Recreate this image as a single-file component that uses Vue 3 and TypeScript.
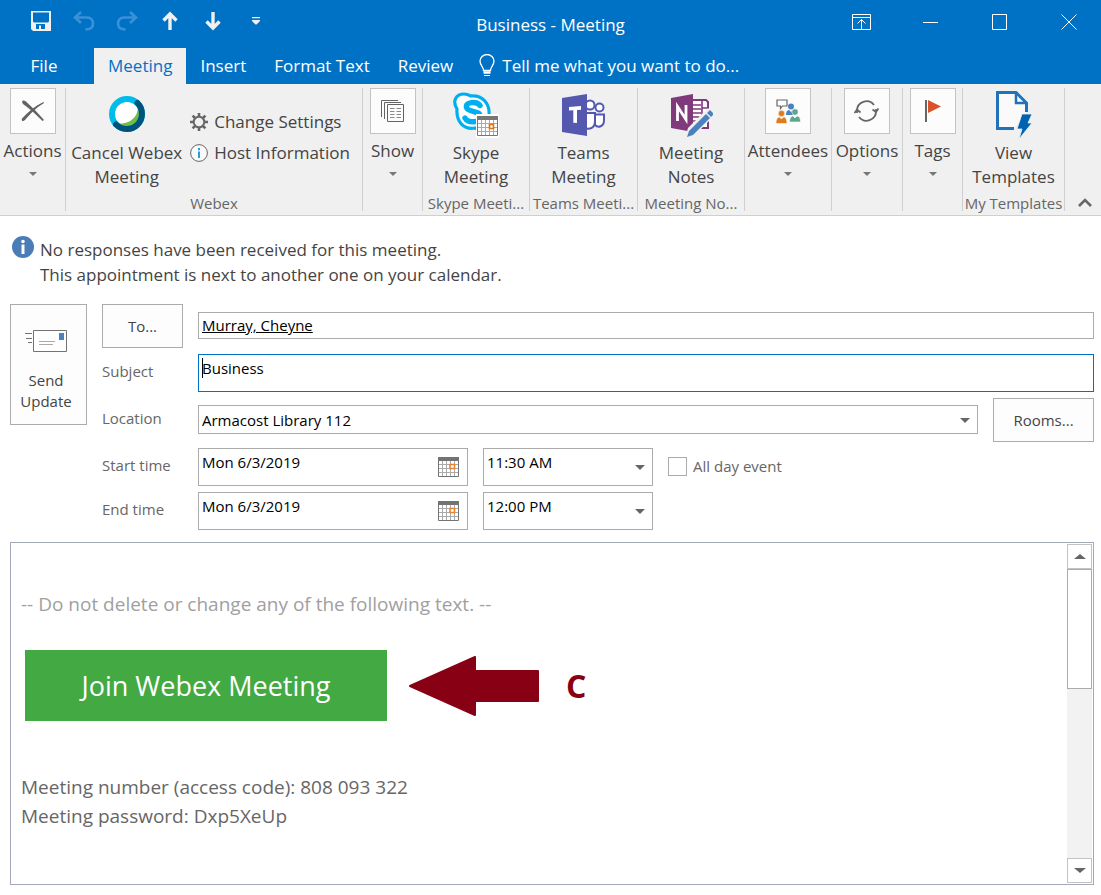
<script setup lang="ts">
import { ref } from 'vue'

const tabs: string[] = ['Meeting', 'Insert', 'Format Text', 'Review']
const activeTab = ref('Meeting')
const attendee = ref('Murray, Cheyne')
const subject = ref('Business')
const meetingLocation = ref('Armacost Library 112')
const allDay = ref(false)

interface TimeRow {
  id: string
  label: string
  date: string
  time: string
}

const timeRows = ref<TimeRow[]>([
  { id: 'start', label: 'Start time', date: 'Mon 6/3/2019', time: '11:30 AM' },
  { id: 'end', label: 'End time', date: 'Mon 6/3/2019', time: '12:00 PM' },
])
const times: string[] = ['11:30 AM', '12:00 PM']
</script>

<template>
  <div class="window">
    <header class="titlebar">
      <div class="quick">
        <button type="button" aria-label="Save">
          <svg width="20" height="20" viewBox="0 0 20 20">
            <path fill="#f0f0f0" fill-rule="evenodd" d="M0 0H20V20H2L0 18ZM2 1.5V10.5L3 11.5H17L18 10.5V1.5ZM5 13V18H8V14.5H10V18H14V13Z" />
          </svg>
        </button>
        <button type="button" aria-label="Undo">
          <svg width="22" height="20" viewBox="0 0 22 20" fill="none" stroke="#3a91d8" stroke-width="2.6">
            <path d="M8 1L2 6.5L8 12M2 6.5H14C18 6.5 20 9.5 20 12.5C20 16 17.5 18.5 12.5 18.5" />
          </svg>
        </button>
        <button type="button" aria-label="Redo">
          <svg width="22" height="20" viewBox="0 0 22 20" fill="none" stroke="#3a91d8" stroke-width="2.6">
            <path d="M14 1L20 6.5L14 12M20 6.5H8C4 6.5 2 9.5 2 12.5C2 16 4.5 18.5 9.5 18.5" />
          </svg>
        </button>
        <button type="button" aria-label="Previous item">
          <svg width="16" height="20" viewBox="0 0 16 20" fill="none" stroke="#f0f0f0" stroke-width="3.4">
            <path d="M8 19V3M1.5 9.5L8 3L14.5 9.5" />
          </svg>
        </button>
        <button type="button" aria-label="Next item">
          <svg width="16" height="20" viewBox="0 0 16 20" fill="none" stroke="#f0f0f0" stroke-width="3.4">
            <path d="M8 1V17M1.5 10.5L8 17L14.5 10.5" />
          </svg>
        </button>
        <button type="button" aria-label="Customize toolbar">
          <svg width="8" height="8" viewBox="0 0 8 8" fill="#f0f0f0">
            <path d="M0 0H8V1.3H0ZM0 3H8V4L4.5 7.5H3.5L0 4Z" />
          </svg>
        </button>
      </div>
      <h1 class="title">Business - Meeting</h1>
      <div class="controls">
        <button type="button" aria-label="Ribbon display options">
          <svg width="19" height="16" viewBox="0 0 19 16" fill="none" stroke="#fff">
            <path d="M.5.5H18.5V15.5H.5ZM.5 3.5H18.5M9.5 15V5.5M5.5 9.5L9.5 5.5L13.5 9.5" />
          </svg>
        </button>
        <button type="button" aria-label="Minimize">
          <svg width="15" height="16" viewBox="0 0 15 16" stroke="#fff"><path d="M0 8.5H15" /></svg>
        </button>
        <button type="button" aria-label="Maximize">
          <svg width="15" height="16" viewBox="0 0 15 16" fill="none" stroke="#fff"><path d="M.5.5H14.5V15.5H.5Z" /></svg>
        </button>
        <button type="button" aria-label="Close">
          <svg width="16" height="16" viewBox="0 0 16 16" stroke="#fff"><path d="M.5.5L15.5 15.5M15.5.5L.5 15.5" /></svg>
        </button>
      </div>
    </header>

    <nav class="tabs">
      <button type="button" class="tab file">File</button>
      <button
        v-for="tab in tabs"
        :key="tab"
        type="button"
        class="tab"
        :class="{ active: tab === activeTab }"
        @click="activeTab = tab"
      >{{ tab }}</button>
      <button type="button" class="tab tell">
        <svg width="16" height="23" viewBox="0 0 16 23" fill="none" stroke="#fff">
          <path stroke-width="1.3" d="M4.5 16.5C4.5 12.5 1 11.5 1 7A7 6.5 0 0 1 15 7C15 11.5 11.5 12.5 11.5 16.5Z" />
          <path stroke-width="2.5" d="M4.5 18.5H11.5" />
          <path d="M5 21.5H11" />
        </svg>
        Tell me what you want to do...
      </button>
    </nav>

    <section class="ribbon" aria-label="Meeting commands">
      <div class="group">
        <button type="button" class="collapsed">
          <span class="box">
            <svg width="24" height="22" viewBox="0 0 24 22" fill="#636363">
              <path d="M1 2C2-.5 4 .5 6 2.5C11 7 17 13 23 20L21.5 21C15 14.5 8 8 2 4Z" />
              <path d="M22.5 2L23 3C16 7 9 14 4 20C2 22 0 21 1 18.5C7 12 14 6 22.5 2Z" />
            </svg>
          </span>
          Actions<i class="down"></i>
        </button>
      </div>

      <div class="group">
        <div class="pair">
          <button type="button" class="large">
            <span class="pic">
              <svg width="38" height="38" viewBox="0 0 38 38">
                <circle cx="19" cy="18" r="15" fill="#fff" />
                <path fill="#6ebe4a" d="M29 7C33 19 22 30 8 27C16 37 34 33 33 17C33 12 31 8 29 7Z" />
                <circle cx="19" cy="18" r="15" fill="none" stroke="#00bceb" stroke-width="6" />
                <path fill="none" stroke="#00537a" stroke-width="6" stroke-linecap="round" d="M29.5 7A15 15 0 1 1 8 28.5" />
              </svg>
            </span>
            Cancel Webex<br />Meeting
          </button>
          <div class="side">
            <button type="button" class="small">
              <svg width="18" height="18" viewBox="0 0 18 18" fill="none" stroke="#666">
                <circle cx="9" cy="9" r="5.3" stroke-width="2" />
                <path stroke-width="2.6" d="M9 0V3.5M9 14.5V18M0 9H3.5M14.5 9H18M2.6 2.6L5 5M13 13L15.4 15.4M15.4 2.6L13 5M5 13L2.6 15.4" />
              </svg>
              Change Settings
            </button>
            <button type="button" class="small">
              <svg width="18" height="18" viewBox="0 0 18 18">
                <circle cx="9" cy="9" r="8.4" fill="#fafafa" stroke="#666" />
                <path fill="#1ba1e2" d="M8 4H10V6.2H8ZM8 7.5H10V14H8Z" />
              </svg>
              Host Information
            </button>
          </div>
        </div>
        <p class="caption">Webex</p>
      </div>

      <div class="group">
        <button type="button" class="collapsed">
          <span class="box">
            <svg width="23" height="22" viewBox="0 0 23 22" fill="none" stroke="#636363">
              <path d="M.5 17V.5H17M3.5 19V2.5H20M6.5 4.5H22.5V21.5H6.5Z" />
              <path stroke="#888" d="M9 8.5H13.5M15.5 8.5H20M9 11.5H13.5M15.5 11.5H20M9 14.5H13.5M15.5 14.5H20M9 17.5H13.5M15.5 17.5H20" />
            </svg>
          </span>
          Show<i class="down"></i>
        </button>
      </div>

      <div class="group">
        <button type="button" class="large">
          <span class="pic">
            <svg width="46" height="46" viewBox="0 0 46 46">
              <path fill="#fff" stroke="#00aff0" stroke-width="3.2" d="M4 17C-1 9 3 2 11 2C14 2 16 3 18 4C29 3 37 11 36 23C40 30 37 38 29 38C26 38 24 37 22 36C11 38 3 30 4 17Z" />
              <path fill="none" stroke="#00aff0" stroke-width="5.4" stroke-linecap="round" d="M27 13.5C24 9 12 9.5 13.5 15.5C14.5 20.5 27 18 27.5 24.5C28 31 15 31.5 12 26" />
              <path fill="#fff" d="M23 22H46V46H23Z" />
              <path fill="#fff" stroke="#777" d="M24.5 24.5H44.5V43.5H24.5Z" />
              <path fill="#777" d="M24 24H45V28H24Z" />
              <path stroke="#aaa" d="M28.5 28V43M32.5 28V43M36.5 28V43M40.5 28V43M25 31.5H44M25 35.5H44M25 39.5H44" />
              <path fill="#fff" stroke="#e07010" stroke-width="1.6" d="M36.5 32.5H40.5V36.5H36.5Z" />
            </svg>
          </span>
          Skype<br />Meeting
        </button>
        <p class="caption">Skype Meeti...</p>
      </div>

      <div class="group">
        <button type="button" class="large">
          <span class="pic">
            <svg width="43" height="42" viewBox="0 0 43 42">
              <g fill="#fff" stroke="#5558af" stroke-width="2">
                <circle cx="28" cy="11" r="4.5" />
                <circle cx="37.5" cy="13.500" r="4" />
                <path d="M33 20.5H42V26C42 33 36 34 33 31ZM22 19H33V27C33 34 28 36 22 34Z" />
              </g>
              <path fill="#5558af" d="M0 4L25 0V42L0 38Z" />
              <path fill="#fff" d="M7 13L19 12V15.8L15 16V29L11.3 28.8V16.2L7 16.4Z" />
            </svg>
          </span>
          Teams<br />Meeting
        </button>
        <p class="caption">Teams Meeti...</p>
      </div>

      <div class="group">
        <button type="button" class="large">
          <span class="pic">
            <svg width="44" height="44" viewBox="-2 -1 44 44">
              <path fill="#fff" stroke="#80397b" stroke-width="2" d="M20 6H35L37 8V34H20Z" />
              <path stroke="#80397b" stroke-width="1.6" d="M22 11H30M22 15H30M22 19H30M22 23H30M22 27H28M31 6V27M31 14H37M31 21H37" />
              <path fill="#80397b" d="M0 4L22 0V38L0 34Z" />
              <path fill="none" stroke="#fff" stroke-width="2.8" d="M6.5 27V12.5L15 25.5V11" />
              <path fill="#f0f0f0" d="M14 44L17 34L37 14L44 21L24 41Z" />
              <path fill="#4a82bd" d="M16 43L18 37L35 20L39 24L22 41ZM36 19L39 16L43 20L40 23Z" />
            </svg>
          </span>
          Meeting<br />Notes
        </button>
        <p class="caption">Meeting No...</p>
      </div>

      <div class="group">
        <button type="button" class="collapsed">
          <span class="box">
            <svg width="25" height="25" viewBox="0 0 25 25">
              <path fill="#fff" stroke="#666" stroke-width="1.2" d="M1 1H11V7H6.5L4.5 9.5V7H1Z" />
              <g fill="#4a82bd"><circle cx="15" cy="7.5" r="3" /><path d="M10 16C10 12 12 11 13 11L15 13L17 11C19 11 20 13 20 16Z" /></g>
              <g fill="#e07a1f" stroke="#fcfcfc" stroke-width=".6"><circle cx="5.5" cy="14.5" r="3.2" /><path d="M0 24.5C0 20 2 18 3.5 18L5.5 20L7.5 18C9.5 18 11 20 11 24.5Z" /></g>
              <g fill="#5fa58c" stroke="#fcfcfc" stroke-width=".6"><circle cx="19" cy="13" r="3.2" /><path d="M13.5 23C13.5 19 15.5 17 17 17L19 19L21 17C23 17 24.5 19 24.5 23Z" /></g>
            </svg>
          </span>
          Attendees<i class="down"></i>
        </button>
      </div>

      <div class="group">
        <button type="button" class="collapsed">
          <span class="box">
            <svg width="25" height="22" viewBox="0 0 25 22" fill="none" stroke="#666" stroke-width="1.8">
              <path d="M3 13V11A9.5 9.5 0 0 1 20 5M22 9V11A9.5 9.5 0 0 1 5 17" />
              <path d="M.5 13L3 9.5L6.5 12.5M18.5 9.5L22 12L24.5 8.5" />
            </svg>
          </span>
          Options<i class="down"></i>
        </button>
      </div>

      <div class="group">
        <button type="button" class="collapsed">
          <span class="box">
            <svg width="16" height="22" viewBox="0 0 16 22">
              <path fill="#666" d="M0 0H2V22H0Z" /><path fill="#d8532c" d="M3 0L16 6.5L3 13Z" />
            </svg>
          </span>
          Tags<i class="down"></i>
        </button>
      </div>

      <div class="group">
        <button type="button" class="large">
          <span class="pic">
            <svg width="36" height="48" viewBox="0 0 36 48">
              <path fill="#fafafa" stroke="#2272b9" stroke-width="3" d="M18 37.5H1.5V1.5H20L30.5 12V21" />
              <path fill="none" stroke="#2272b9" stroke-width="2.5" d="M20 2V12H30" />
              <path fill="#0063b1" stroke="#f0f0f0" stroke-width=".8" d="M26 23H36L32 32H36L23 48L26 38H21Z" />
            </svg>
          </span>
          View<br />Templates
        </button>
        <p class="caption">My Templates</p>
      </div>

      <div class="group last">
        <button type="button" class="collapse" aria-label="Collapse the ribbon">
          <svg width="14" height="9" viewBox="0 0 14 9" fill="none" stroke="#666" stroke-width="2.6"><path d="M1 8L7 2L13 8" /></svg>
        </button>
      </div>
    </section>

    <main class="content">
      <div class="notice" role="status">
        <svg width="22" height="22" viewBox="0 0 22 22">
          <circle cx="11" cy="11" r="11" fill="#4a7db5" /><circle cx="11" cy="5.5" r="1.8" fill="#fff" />
          <path fill="#fff" d="M9.5 8.5H12.5V18H9.5Z" />
        </svg>
        <p>No responses have been received for this meeting.<br />This appointment is next to another one on your calendar.</p>
      </div>

      <form class="form" @submit.prevent>
        <button type="submit" class="plain send">
          <svg width="42" height="22" viewBox="0 0 42 22">
            <path fill="#fff" stroke="#737373" d="M8.5.5H41.5V21.5H8.5Z" />
            <path fill="#4a82bd" d="M34 3H39V10H34Z" />
            <path stroke="#aaa" d="M14 11.5H30M14 14.5H28" />
            <path stroke="#737373" d="M0 3.5H7M1 8.5H7M3 12.5H7" />
          </svg>
          <span>Send<br />Update</span>
        </button>
        <div class="rows">
          <div class="row">
            <button type="button" class="plain to">To...</button>
            <input v-model="attendee" class="field recipient" type="text" aria-label="To" />
          </div>
          <div class="row">
            <label for="subject">Subject</label>
            <div class="field tall focused">
              <input id="subject" v-model="subject" type="text" />
              <i class="caret"></i>
            </div>
          </div>
          <div class="row">
            <label for="location">Location</label>
            <div class="field place">
              <select id="location" v-model="meetingLocation">
                <option>Armacost Library 112</option>
              </select>
              <i class="arrow"></i>
            </div>
            <button type="button" class="plain rooms">Rooms...</button>
          </div>
          <div v-for="row in timeRows" :key="row.id" class="row">
            <label :for="row.id">{{ row.label }}</label>
            <div class="field tall date">
              <input :id="row.id" v-model="row.date" type="text" />
              <button type="button" class="calendar" :aria-label="'Choose ' + row.label + ' date'">
                <svg width="21" height="20" viewBox="0 0 21 20">
                  <path fill="#fff" stroke="#737373" d="M.5.5H20.5V19.5H.5Z" />
                  <path fill="#737373" d="M0 0H21V4H0Z" />
                  <path stroke="#aaa" d="M4.5 4V19M8.5 4V19M12.5 4V19M16.5 4V19M1 7.5H20M1 11.5H20M1 15.5H20" />
                  <path fill="#fff" stroke="#e8842c" stroke-width="1.6" d="M12 7.5H16.5V11.5H12Z" />
                </svg>
              </button>
            </div>
            <div class="field tall time">
              <select v-model="row.time" :aria-label="row.label">
                <option v-for="t in times" :key="t">{{ t }}</option>
              </select>
              <i class="arrow"></i>
            </div>
            <label v-if="row.id === 'start'" class="allday">
              <input v-model="allDay" type="checkbox" />All day event
            </label>
          </div>
        </div>
      </form>

      <section class="editor" aria-label="Message">
        <div class="message">
          <p class="warning">-- Do not delete or change any of the following text. --</p>
          <div class="joinrow">
            <a href="#join" class="join">Join Webex Meeting</a>
            <svg width="131" height="60" viewBox="0 0 131 60">
              <path fill="#870014" stroke="#870014" stroke-width="2" stroke-linejoin="round" d="M1 30L66 1V15H129V45H66V59Z" />
            </svg>
            <strong>C</strong>
          </div>
          <p class="details">Meeting number (access code): 808 093 322<br />Meeting password: Dxp5XeUp</p>
        </div>
        <div class="scrollbar">
          <button type="button" aria-label="Scroll up"><i class="arrow up"></i></button>
          <div class="thumb"></div>
          <button type="button" class="bottom" aria-label="Scroll down"><i class="arrow"></i></button>
        </div>
      </section>
    </main>
  </div>
</template>

<style>
body {
  margin: 0;
  background: #fff;
}
</style>

<style scoped>
.window {
  display: flex;
  flex-direction: column;
  min-height: 100vh;
  font-family: "Open Sans", "Noto Sans", sans-serif;
  font-size: 17px;
  color: #444;
}
.window * {
  box-sizing: border-box;
}
h1,
p {
  margin: 0;
}
svg {
  display: block;
  flex: none;
}
button,
input,
select {
  font: inherit;
  color: inherit;
  margin: 0;
  padding: 0;
  border: 0;
  border-radius: 0;
  background: none;
  outline: none;
  appearance: none;
}
.titlebar {
  display: grid;
  grid-template-columns: 1fr auto 1fr;
  align-items: center;
  height: 48px;
  background: #0072c6;
  color: #fff;
}
.quick,
.controls {
  display: flex;
  padding-bottom: 4px;
}
.quick {
  padding-left: 19px;
  padding-bottom: 6px;
}
.quick button,
.controls button {
  display: flex;
  align-items: center;
  justify-content: center;
  height: 40px;
}
.quick button {
  width: 43px;
}
.controls {
  justify-content: flex-end;
  gap: 4px;
}
.controls button {
  width: 65px;
}
.title {
  font-size: 17px;
  font-weight: 400;
}
.tabs {
  display: flex;
  height: 36px;
  background: #0072c6;
}
.tab {
  padding: 0 14px 2px;
  color: #fff;
  white-space: nowrap;
}
.tab.file {
  width: 88px;
  margin-right: 6px;
}
.tab.active {
  background: #f0f0f0;
  color: #0072c6;
}
.tell {
  display: flex;
  align-items: center;
  gap: 7px;
  padding-left: 12px;
}
.ribbon {
  display: grid;
  grid-template-columns: 66fr 297fr 60fr 107fr 108fr 107fr 87fr 71fr 60fr 102fr 36fr;
  padding: 4px 0;
  background: #f0f0f0;
  border-bottom: 1px solid #cfcfcf;
}
.group {
  display: flex;
  flex-direction: column;
  align-items: center;
  min-width: 0;
  height: 123px;
  border-right: 1px solid #cfcfcf;
}
.group.last {
  align-items: flex-end;
  justify-content: flex-end;
  border: 0;
}
.collapse {
  padding: 4px 9px 4px 4px;
}
.collapsed,
.large {
  display: flex;
  flex-direction: column;
  align-items: center;
  line-height: 24px;
  white-space: nowrap;
}
.large {
  display: block;
}
.box {
  display: flex;
  align-items: center;
  justify-content: center;
  width: 46px;
  height: 46px;
  margin-bottom: 5px;
  border: 1px solid #c3c3c3;
  background: #fcfcfc;
}
.pic {
  display: flex;
  align-items: center;
  justify-content: center;
  height: 53px;
}
.down {
  margin-top: 9px;
  border: 4px solid transparent;
  border-top-color: #777;
  border-bottom: 0;
}
.caption {
  margin-top: auto;
  font-size: 15px;
  line-height: 16px;
  color: #666;
  white-space: nowrap;
}
.pair {
  display: flex;
  gap: 8px;
  padding-right: 7px;
}
.side {
  display: flex;
  flex-direction: column;
  gap: 7px;
  padding-top: 22px;
}
.small {
  display: flex;
  align-items: center;
  gap: 6px;
  line-height: 24px;
  white-space: nowrap;
}
.content {
  display: flex;
  flex: 1;
  flex-direction: column;
  padding: 20px 7px 10px 10px;
}
.notice {
  display: flex;
  gap: 6px;
  padding-left: 2px;
  line-height: 25px;
}
.notice p {
  padding-top: 1px;
}
.form {
  display: flex;
  align-items: flex-start;
  gap: 15px;
  margin-top: 17px;
  font-size: 15px;
}
.plain {
  border: 1px solid #ababab;
  background: #fdfdfd;
}
.send {
  display: flex;
  flex: none;
  flex-direction: column;
  align-items: center;
  gap: 18px;
  width: 77px;
  padding: 25px 5px 12px 0;
  line-height: 21px;
}
.rows {
  display: flex;
  flex: 1;
  flex-direction: column;
  gap: 6px;
}
.row {
  display: flex;
  align-items: center;
  gap: 15px;
}
.row > label:first-child,
.to {
  flex: none;
  width: 81px;
  color: #666;
}
.row > label:first-child {
  padding-bottom: 4px;
}
.to,
.rooms {
  height: 44px;
  color: #444;
}
.rooms {
  width: 101px;
}
.field {
  display: flex;
  position: relative;
  flex: 1;
  min-width: 0;
  border: 1px solid #ababab;
  background: #fff;
  color: #000;
}
.field input,
.field select {
  flex: 1;
  min-width: 0;
  padding: 0 3px;
}
.recipient {
  height: 27px;
  margin-bottom: 1px;
  padding: 0 3px 1px;
  text-decoration: underline;
}
.tall {
  height: 38px;
}
.field.tall input,
.field.tall select {
  padding-bottom: 10px;
}
.focused {
  border-color: #0072c6;
}
.caret {
  position: absolute;
  top: 3px;
  left: 3px;
  width: 1px;
  height: 20px;
  background: #000;
}
.place {
  height: 29px;
  margin-bottom: 1px;
}
.date {
  flex: 0 0 270px;
}
.time {
  flex: 0 0 170px;
}
.calendar {
  padding: 0 8px;
}
.arrow {
  border: 5px solid transparent;
  border-top-color: #666;
  border-bottom: 0;
}
.field .arrow {
  position: absolute;
  top: calc(50% - 2px);
  right: 7px;
  pointer-events: none;
}
.arrow.up {
  border-top: 0;
  border-bottom: 5px solid #666;
}
.allday {
  display: flex;
  align-items: center;
  gap: 6px;
  padding-bottom: 2px;
  color: #666;
}
.allday input {
  width: 19px;
  height: 19px;
  border: 1px solid #ababab;
}
.allday input:checked {
  background: #0072c6;
}
.editor {
  display: flex;
  flex: 1;
  margin-top: 12px;
  border: 1px solid #a3a9b5;
}
.message {
  flex: 1;
  padding: 47px 10px;
  font-size: 19px;
  line-height: 29px;
  color: #666;
}
.warning {
  color: #a0a0a0;
}
.joinrow {
  display: flex;
  align-items: center;
  margin: 31px 0 52px 4px;
}
.join {
  width: 362px;
  margin-right: 22px;
  background: #43a942;
  color: #fff;
  font-size: 27px;
  line-height: 71px;
  text-align: center;
  text-decoration: none;
}
.joinrow strong {
  margin-left: 26px;
  color: #870014;
  font-size: 32px;
}
.scrollbar {
  display: flex;
  flex-direction: column;
  width: 25px;
  margin: 1px;
  background: #f2f2f2;
}
.scrollbar button {
  display: flex;
  align-items: center;
  justify-content: center;
  height: 25px;
  border: 1px solid #c3c3c3;
  background: #fff;
}
.scrollbar .arrow {
  border-left-width: 6px;
  border-right-width: 6px;
}
.thumb {
  height: 120px;
  border: 1px solid #ababab;
  background: #fff;
}
.bottom {
  margin-top: auto;
}
</style>
